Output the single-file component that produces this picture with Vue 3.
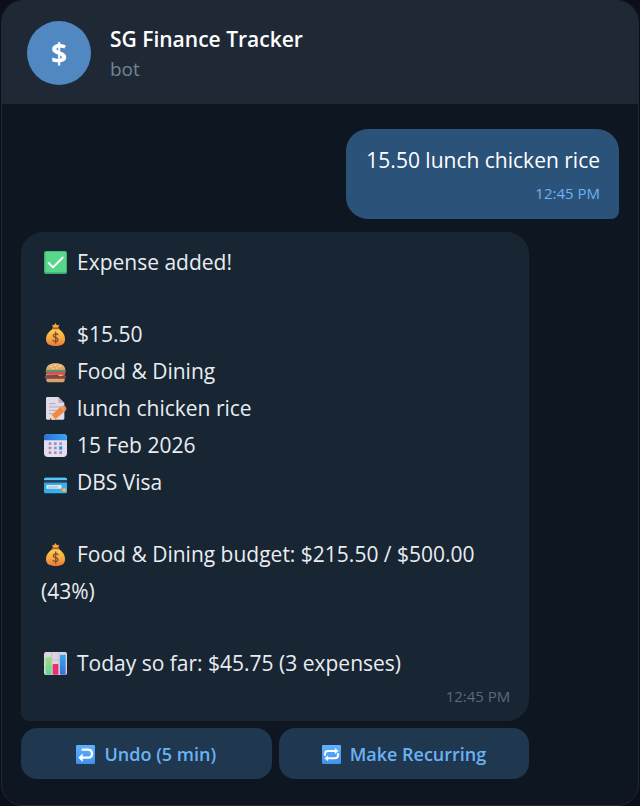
<script setup>
const botName = 'SG Finance Tracker'

const groups = [
  [{ icon: 'check', text: 'Expense added!' }],
  [
    { icon: 'money', text: '$15.50' },
    { icon: 'burger', text: 'Food & Dining' },
    { icon: 'memo', text: 'lunch chicken rice' },
    { icon: 'calendar', text: '15 Feb 2026' },
    { icon: 'card', text: 'DBS Visa' },
  ],
  [{ icon: 'money', text: 'Food & Dining budget: $215.50 / $500.00 (43%)' }],
  [{ icon: 'chart', text: 'Today so far: $45.75 (3 expenses)' }],
]

const actions = [
  { icon: 'undo', label: 'Undo (5 min)' },
  { icon: 'repeat', label: 'Make Recurring' },
]
</script>

<template>
  <svg class="sprite" width="0" height="0" aria-hidden="true">
    <defs>
      <linearGradient id="g-bag" x1="0" y1="0" x2="0" y2="1">
        <stop offset="0" stop-color="#ffd050" /><stop offset=".55" stop-color="#f9aa3c" /><stop offset="1" stop-color="#e5763b" />
      </linearGradient>
      <linearGradient id="g-bun" x1="0" y1="0" x2="0" y2="1">
        <stop offset="0" stop-color="#edbd82" /><stop offset="1" stop-color="#d99a62" />
      </linearGradient>
      <linearGradient id="g-cal" x1="0" y1="0" x2="1" y2="0">
        <stop offset="0" stop-color="#2b6fd6" /><stop offset="1" stop-color="#35a7f5" />
      </linearGradient>
      <linearGradient id="g-card" x1="0" y1="0" x2="1" y2="1">
        <stop offset="0" stop-color="#2fa4e6" /><stop offset="1" stop-color="#3bb5f2" />
      </linearGradient>
      <linearGradient id="g-tile" x1="0" y1="0" x2="0" y2="1">
        <stop offset="0" stop-color="#5fb2ff" /><stop offset="1" stop-color="#4390ea" />
      </linearGradient>
      <linearGradient id="g-green" x1="0" y1="0" x2="0" y2="1">
        <stop offset="0" stop-color="#9be36b" /><stop offset="1" stop-color="#5fd49a" />
      </linearGradient>
      <linearGradient id="g-blue" x1="0" y1="0" x2="0" y2="1">
        <stop offset="0" stop-color="#2fa9f2" /><stop offset="1" stop-color="#3a70d0" />
      </linearGradient>
    </defs>
    <symbol id="i-check" viewBox="0 0 69 69">
      <rect width="69" height="69" rx="6" fill="#43ae72" />
      <rect x="4" y="2" width="62" height="62" rx="4" fill="#57d78c" />
      <path d="M14 36 27 49 56 20" fill="none" stroke="#fff" stroke-width="6" stroke-linecap="round" stroke-linejoin="round" />
    </symbol>
    <symbol id="i-money" viewBox="0 0 69 69">
      <path d="M24 5 30 7 34 0 39 7 46 5 42 15H28Z" fill="#f5a93b" />
      <path d="M27 17H43C55 24 63 35 63 48C63 63 54 69 35 69S6 63 6 48C6 35 15 24 27 17Z" fill="url(#g-bag)" />
      <path d="M26 16H44" stroke="#a65d35" stroke-width="5" stroke-linecap="round" />
      <path d="M42 35C39 31 28 31 28 38C28 45 42 42 42 50C42 57 31 57 27 52M35 27V60" fill="none" stroke="#805038" stroke-width="4" stroke-linecap="round" />
    </symbol>
    <symbol id="i-burger" viewBox="0 0 69 69">
      <path d="M6 32C6 17 17 10 35 10S64 17 64 32Z" fill="url(#g-bun)" />
      <path d="M20 20h3M32 16h3M46 19h3M37 24h3M27 26h2" stroke="#fbe3b7" stroke-width="3" stroke-linecap="round" />
      <path d="M7 53H62V61Q62 67 53 67H16Q7 67 7 61Z" fill="#dda26c" />
      <rect x="2" y="46" width="65" height="10" rx="5" fill="#7c4a45" />
      <path d="M6 41H62V45L49 49 40 45 6 46Z" fill="#fbc44b" />
      <rect x="7" y="35" width="57" height="9" rx="4" fill="#ee3f68" />
      <path d="M3 34Q8 29 18 31H54Q66 30 66 35Q62 38 56 35Q49 38 42 35Q34 38 28 35Q20 40 14 36Q7 40 3 34Z" fill="#41a35a" />
    </symbol>
    <symbol id="i-memo" viewBox="0 0 69 69">
      <path d="M10 0H43L61 18V64Q61 68 57 68H10Q6 68 6 64V4Q6 0 10 0Z" fill="#e2dae8" />
      <path d="M43 0 61 18H47Q43 18 43 14Z" fill="#b9afc2" />
      <path d="M15 20H35M15 30H51M15 40H38M15 50H28" stroke="#b5aaba" stroke-width="3" />
      <path d="M23 54 51 28 64 41 34 67Z" fill="#f3893c" />
      <path d="M54 28 57 26Q61 24 65 29T67 38L65 40Z" fill="#f08a50" />
      <path d="M49 31 53 28 65 40 61 44Z" fill="#d9a58f" />
      <path d="M23 54 34 67 17 69Z" fill="#ffd4a2" />
      <path d="M19 63 24 68 17 69Z" fill="#554252" />
    </symbol>
    <symbol id="i-calendar" viewBox="0 0 69 69">
      <rect width="69" height="69" rx="12" fill="#e6dcf0" />
      <path d="M0 19V12Q0 0 12 0H57Q69 0 69 12V19Z" fill="url(#g-cal)" />
      <g fill="#9d90a9">
        <rect x="14" y="25" width="8" height="8" rx="2" /><rect x="30" y="25" width="8" height="8" rx="2" /><rect x="46" y="25" width="8" height="8" rx="2" />
        <rect x="14" y="38" width="8" height="8" rx="2" /><rect x="30" y="38" width="8" height="8" rx="2" />
        <rect x="14" y="52" width="8" height="8" rx="2" /><rect x="30" y="52" width="8" height="8" rx="2" /><rect x="46" y="52" width="8" height="8" rx="2" />
      </g>
      <rect x="45" y="37" width="10" height="10" rx="2" fill="#2c9df0" />
    </symbol>
    <symbol id="i-card" viewBox="0 0 69 69">
      <rect y="20" width="69" height="47" rx="5" fill="url(#g-card)" />
      <path d="M0 27V25Q0 20 5 20H64Q69 20 69 25V27Z" fill="#54c9f7" />
      <rect y="27" width="69" height="8" fill="#24435e" />
      <rect x="7" y="42" width="46" height="11" rx="2" fill="#e3e6f1" />
      <path d="M12 48H41" stroke="#a9b3c8" stroke-width="3" />
      <circle cx="56" cy="57" r="5" fill="#ed9148" /><circle cx="61" cy="57" r="5" fill="#f8c04d" />
    </symbol>
    <symbol id="i-chart" viewBox="0 0 69 69">
      <rect width="69" height="69" rx="6" fill="#ded3e4" />
      <path d="M0 24H69M0 46H69M23 0V69M45 0V69" stroke="#bdb0c5" stroke-width="2" />
      <rect x="5" y="16" width="17" height="52" rx="2" fill="url(#g-green)" />
      <rect x="26" y="36" width="17" height="32" rx="2" fill="#e5326b" />
      <rect x="48" y="8" width="17" height="60" rx="2" fill="url(#g-blue)" />
    </symbol>
    <symbol id="i-undo" viewBox="0 0 57 57">
      <rect width="57" height="57" rx="4" fill="url(#g-tile)" />
      <path d="M20 14H35C44 14 48 19 48 26S44 38 35 38H16" fill="none" stroke="#fff" stroke-width="7" stroke-linecap="round" />
      <path d="M8 38 19 27V49Z" fill="#fff" stroke="#fff" stroke-width="2" stroke-linejoin="round" />
    </symbol>
    <symbol id="i-repeat" viewBox="0 0 57 57">
      <rect width="57" height="57" rx="4" fill="url(#g-tile)" />
      <path d="M9 30V27Q9 18 18 18H41M48 27V30Q48 40 39 40H16" fill="none" stroke="#fff" stroke-width="6" stroke-linecap="round" />
      <path d="M39 10 49 18 39 26ZM18 32 8 40 18 48Z" fill="#fff" stroke="#fff" stroke-linejoin="round" />
    </symbol>
  </svg>

  <main class="chat">
    <header class="header">
      <div class="avatar" aria-hidden="true">$</div>
      <div>
        <h1 class="name">{{ botName }}</h1>
        <p class="status">bot</p>
      </div>
    </header>

    <section class="messages">
      <article class="bubble sent">
        <p class="line">15.50 lunch chicken rice</p>
        <time class="time">12:45 PM</time>
      </article>

      <div class="reply">
        <article class="bubble received">
          <div class="groups">
            <div v-for="(group, i) in groups" :key="i">
              <p v-for="row in group" :key="row.text" class="line">
                <svg class="emoji" aria-hidden="true"><use :href="'#i-' + row.icon" /></svg>{{ row.text }}
              </p>
            </div>
          </div>
          <time class="time">12:45 PM</time>
        </article>

        <div class="actions">
          <button v-for="action in actions" :key="action.label" type="button" class="action">
            <svg class="action-icon" aria-hidden="true"><use :href="'#i-' + action.icon" /></svg>
            {{ action.label }}
          </button>
        </div>
      </div>
    </section>
  </main>
</template>

<style>
body {
  margin: 0;
  background: #0a0f1a;
}
</style>

<style scoped>
.sprite {
  position: absolute;
}
.chat {
  box-sizing: border-box;
  overflow: hidden;
  margin: 0 1px;
  border: 1px solid #1f2936;
  border-radius: 22px;
  background: #0e1621;
  color: #e9edf1;
  font-family: "Open Sans", "Noto Sans", sans-serif;
  font-size: 21px;
}
.header {
  display: flex;
  align-items: center;
  gap: 19px;
  padding: 20px 25px 19px;
  background: #1f2936;
}
.avatar {
  display: grid;
  place-items: center;
  width: 64px;
  height: 64px;
  border-radius: 50%;
  background: #5288c1;
  color: #fff;
  font-size: 28px;
  font-weight: 700;
}
.name,
.status,
.line {
  margin: 0;
}
.name {
  color: #fff;
  font-size: 21px;
  font-weight: 600;
  line-height: 30px;
}
.status {
  color: #708499;
  font-size: 19px;
  line-height: 30px;
}
.header > div:last-child {
  padding-top: 2px;
}
.messages {
  display: flex;
  flex-direction: column;
  gap: 13px;
  padding: 25px 19px 26px;
}
.bubble {
  display: flex;
  flex-direction: column;
  gap: 4px;
  padding: 12px 19px 14px 20px;
  border-radius: 22px;
}
.sent {
  align-self: flex-end;
  padding-top: 13px;
  padding-bottom: 15px;
  border-bottom-right-radius: 8px;
  background: #2b5278;
  color: #fff;
}
.received {
  border-bottom-left-radius: 8px;
  background: #182533;
}
.reply {
  display: flex;
  flex-direction: column;
  gap: 7px;
  width: 85%;
}
.groups {
  display: flex;
  flex-direction: column;
  gap: 35px;
}
.line {
  line-height: 37px;
}
.emoji {
  width: 23px;
  height: 23px;
  margin: 0 10px 0 3px;
  vertical-align: -4px;
}
.time {
  align-self: flex-end;
  color: #5b6a7a;
  font-size: 15px;
  line-height: 21px;
}
.sent .time {
  color: #6ab3f3;
}
.actions {
  display: grid;
  grid-template-columns: 1fr 1fr;
  gap: 7px;
}
.action {
  display: flex;
  align-items: center;
  justify-content: center;
  gap: 9px;
  padding: 13px 12px 11px;
  border: 0;
  border-radius: 16px;
  background: #203750;
  color: #6ab3f3;
  font: inherit;
  font-size: 18px;
  font-weight: 600;
  line-height: 27px;
  cursor: pointer;
}
.action-icon {
  width: 19px;
  height: 19px;
}
</style>
